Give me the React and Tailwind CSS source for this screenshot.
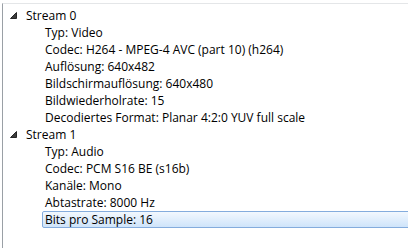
export default function App() {
  const rows = [
    { t: "Stream 0", lvl: 0 },
    { t: "Typ: Video", lvl: 1 },
    { t: "Codec: H264 - MPEG-4 AVC (part 10) (h264)", lvl: 1 },
    { t: "Auflösung: 640x482", lvl: 1 },
    { t: "Bildschirmauflösung: 640x480", lvl: 1 },
    { t: "Bildwiederholrate: 15", lvl: 1 },
    { t: "Decodiertes Format: Planar 4:2:0 YUV full scale", lvl: 1 },
    { t: "Stream 1", lvl: 0 },
    { t: "Typ: Audio", lvl: 1 },
    { t: "Codec: PCM S16 BE (s16b)", lvl: 1 },
    { t: "Kanäle: Mono", lvl: 1 },
    { t: "Abtastrate: 8000 Hz", lvl: 1 },
    { t: "Bits pro Sample: 16", lvl: 1, sel: true },
  ];
  return (
    <div className="w-[408px] h-[248px] bg-white overflow-hidden" style={{ fontFamily: '"Open Sans", "Noto Sans", sans-serif' }}>
      <div className="ml-[2px] mt-[3px] h-[245px] border-l border-t border-l-[#9aa0a6] border-t-[#e4e6e8] pt-[3px] text-[12px] text-black">
        {rows.map((r, i) =>
          r.lvl === 0 ? (
            <div key={i} className="h-[17px] flex items-center">
              <svg width="23" height="17" viewBox="0 0 23 17" className="shrink-0">
                <path d="M13.5 5.5 L13.5 11.5 L7.5 11.5 Z" fill="#3c3c3c" stroke="#262626" strokeWidth="1" strokeLinejoin="round" />
              </svg>
              <span className="leading-[17px]">{r.t}</span>
            </div>
          ) : (
            <div key={i} className="h-[17px] flex items-center pl-[39px]">
              <span
                className={
                  r.sel
                    ? "flex-1 h-[17px] leading-[15px] pl-[2px] border border-[#84acdd] rounded-[2px] bg-gradient-to-b from-[#f2f8fe] to-[#cfe4fa] -mr-[4px]"
                    : "leading-[17px] pl-[3px]"
                }
              >
                {r.t}
              </span>
            </div>
          )
        )}
      </div>
    </div>
  );
}
